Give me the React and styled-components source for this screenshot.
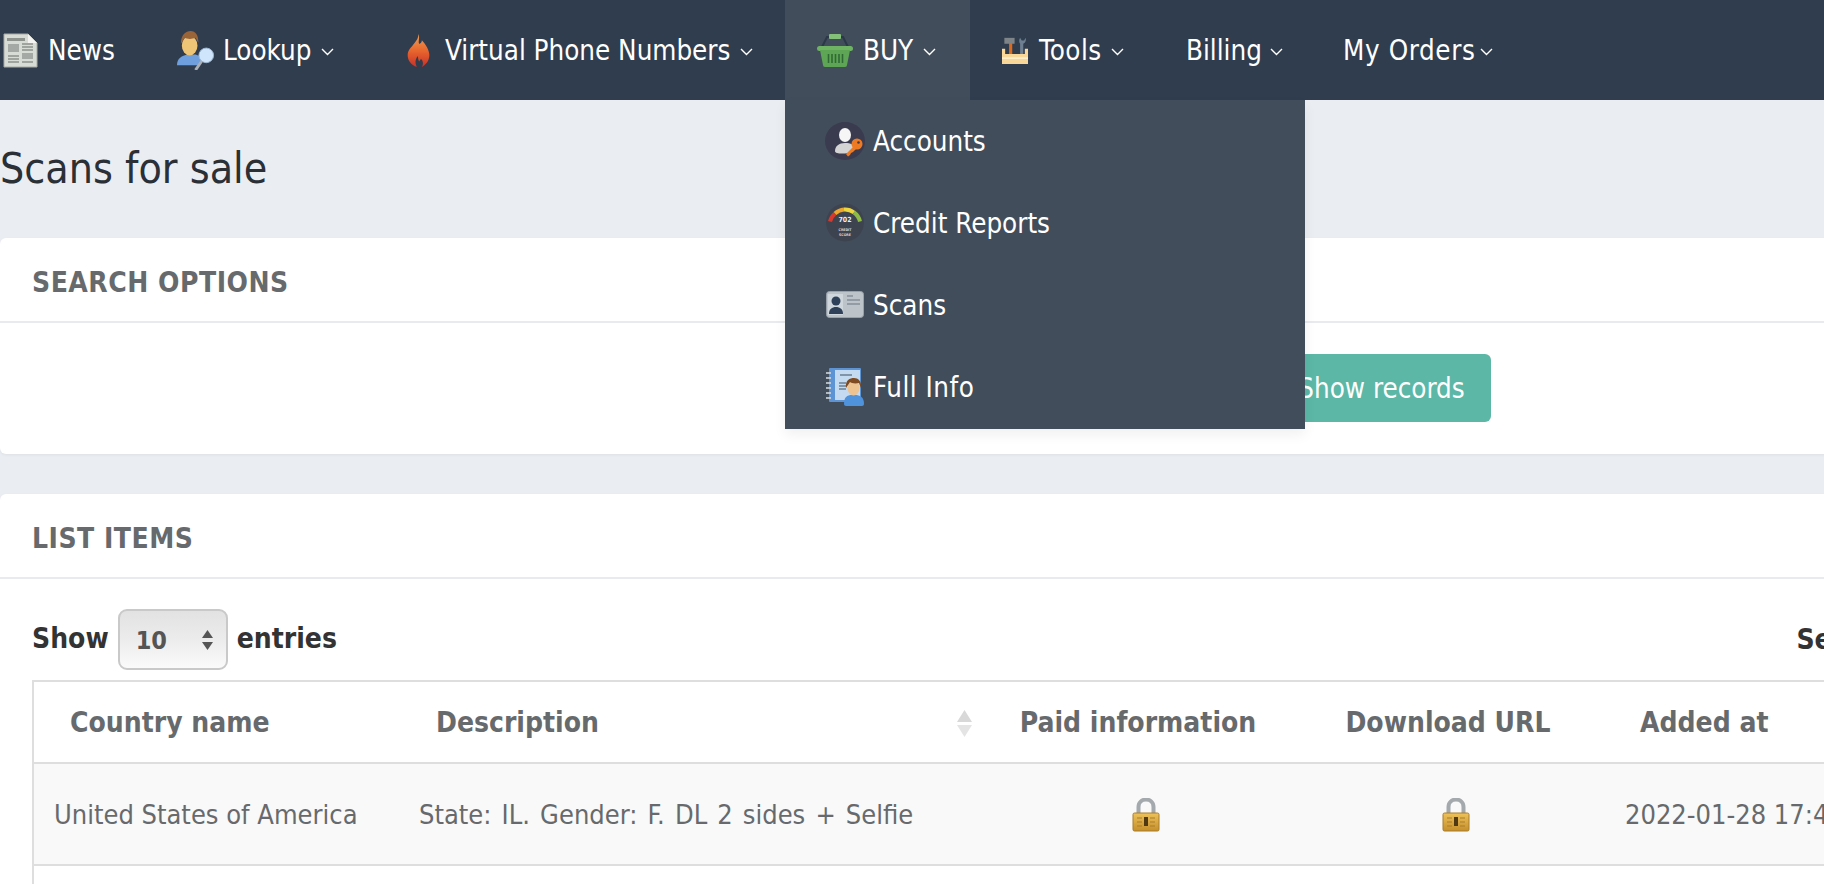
import React from "react";
import styled, { createGlobalStyle } from "styled-components";

const GlobalStyle = createGlobalStyle`
  html, body {
    margin: 0;
    padding: 0;
    height: 100%;
    overflow: hidden;
    background: #eaedf2;
  }
  body {
    font-family: "DejaVu Sans", Tahoma, sans-serif;
    font-stretch: condensed;
    color: #2b2f36;
  }
  * {
    box-sizing: border-box;
  }
`;

const NewsIcon = () => (
  <svg width="35" height="35" viewBox="0 0 35 35">
    <path d="M1 1h24l9 9v24H1z" fill="#d8dcd6" stroke="#a9aca6" />
    <path d="M25 1v9h9z" fill="#f4f5f2" />
    <path d="M4 5h18v3H4z" fill="#8f938e" />
    <path d="M5 11h11v8H5z" fill="#a5a9a5" />
    <path d="M19 11h11M19 14h11M19 17h11M5 23h11M5 26h11M5 29h11M19 29h11" stroke="#8d918c" strokeWidth="1.5" />
    <path d="M19 20h11v6H19z" fill="#a5a9a5" />
  </svg>
);

const LookupIcon = () => (
  <svg width="39" height="39" viewBox="0 0 40 40">
    <path d="M1 35c0-7 5-10 11-11h8c4 1 6 3 7 5l-3 6z" fill="#6f9fdc" />
    <ellipse cx="14" cy="15" rx="8" ry="10" fill="#eec477" />
    <path d="M5 13c0-9 5-13 10-13s8 4 8 12l-3-5c-5 2-9 1-11 0z" fill="#9a6439" />
    <path d="M20 40l7-10" stroke="#a9b0b8" strokeWidth="3" />
    <circle cx="31" cy="25" r="7.5" fill="#cfe5fb" stroke="#9db8d1" />
  </svg>
);

const FireIcon = () => (
  <svg width="25" height="35" viewBox="0 0 30 38" preserveAspectRatio="none">
    <defs>
      <linearGradient id="fire" x1="0" y1="0" x2="0" y2="1">
        <stop offset="0" stopColor="#f0a15a" />
        <stop offset="0.5" stopColor="#e8672e" />
        <stop offset="1" stopColor="#c7302a" />
      </linearGradient>
    </defs>
    <path d="M15 1c2 5-1 8 1 11 3-1 3-3 3-4 5 5 9 11 9 16 0 7-5 11-9 13 2-3 2-6-1-9-1 2-2 2-2 3-2-2-1-4-2-6-2 3-4 6-1 12C6 35 2 30 2 24c0-6 5-9 8-13 3-3 5-6 5-10z" fill="url(#fire)" />
  </svg>
);

const BasketIcon = () => (
  <svg width="36" height="33" viewBox="0 0 36 33">
    <path d="M5 13l5-10h16l5 10" fill="none" stroke="#2b3848" strokeWidth="2" />
    <rect x="12" y="0" width="12" height="5" rx="1" fill="#84c178" />
    <rect x="0" y="12" width="36" height="5" rx="2.500" fill="#6eb263" />
    <path d="M3 16h30l-3 15a2 2 0 0 1-2 2H8a2 2 0 0 1-2-2z" fill="#5fa556" />
    <path d="M11.500 20v9M15 20v9M18.500 20v9M22 20v9M25.500 20v9" stroke="#2f6a33" strokeWidth="1.600" />
  </svg>
);

const ToolsIcon = () => (
  <svg width="26" height="27" viewBox="0 0 33 32" preserveAspectRatio="none">
    <path d="M9 4h4v20H9z" fill="#dd6a1f" />
    <path d="M3 1h13v7H3z" fill="#7f8489" />
    <path d="M23 8v14h4V8c3-1 4-4 3-7l-2 3h-3l-2-3c-2 3-1 6 0 7z" fill="#6d7f90" />
    <path d="M0 14h4v6h25v-6h4v18H0z" fill="#f9d798" />
    <path d="M0 24h33v2H0z" fill="#fdeecb" />
  </svg>
);

const AccountsIcon = () => (
  <svg width="40" height="38" viewBox="0 0 40 38">
    <ellipse cx="20" cy="19" rx="20" ry="19" fill="#3a3b4f" />
    <ellipse cx="20" cy="13" rx="6" ry="7" fill="#f6f6f6" />
    <path d="M10 29c0-5 4-8 10-8s9 2 9 4l-6 6c-5 1-13 1-13-2z" fill="#d4d4d4" />
    <circle cx="32" cy="22" r="5.500" fill="#ef7a24" />
    <circle cx="33.500" cy="20.500" r="1.300" fill="#3a3b4f" />
    <path d="M29 24l-8 8 2 2.500 2-1.500 1-2 2-1 4-4z" fill="#ef7a24" />
  </svg>
);

const GaugeIcon = () => (
  <svg width="40" height="39" viewBox="0 0 40 38">
    <circle cx="20" cy="19" r="19" fill="#3d4450" />
    <path d="M5 18a15 15 0 0 1 5-8" fill="none" stroke="#d8392e" strokeWidth="4" />
    <path d="M10 10a15 15 0 0 1 9-4" fill="none" stroke="#eda52d" strokeWidth="4" />
    <path d="M19 6a15 15 0 0 1 10 3" fill="none" stroke="#ecd63f" strokeWidth="4" />
    <path d="M29 9a15 15 0 0 1 6 9" fill="none" stroke="#8dbb45" strokeWidth="4" />
    <text x="20" y="18" fontSize="7" fontWeight="700" fill="#eceff2" textAnchor="middle">702</text>
    <text x="20" y="27" fontSize="3.500" fontWeight="700" fill="#d5d8dc" textAnchor="middle">CREDIT</text>
    <text x="20" y="32" fontSize="3.500" fontWeight="700" fill="#d5d8dc" textAnchor="middle">SCORE</text>
  </svg>
);

const CardIcon = () => (
  <svg width="38" height="27" viewBox="0 0 38 27">
    <rect x="0.500" y="0.500" width="37" height="26" rx="3" fill="#bcc3c9" stroke="#98a1a9" />
    <rect x="2" y="3" width="15" height="21" fill="#cfd6dc" />
    <circle cx="10" cy="10" r="4.500" fill="#2f4159" />
    <path d="M3 23c0-5 3-7 7-7s7 2 7 7z" fill="#2f4159" />
    <path d="M21 5h6M21 9h13M21 13h13" stroke="#939ca4" strokeWidth="1.800" />
  </svg>
);

const BookIcon = () => (
  <svg width="39" height="39" viewBox="0 0 39 39">
    <rect x="3" y="1" width="32" height="34" rx="1" fill="#5d95d4" />
    <rect x="9" y="3" width="25" height="30" fill="#c4daf0" />
    <path d="M14 8h12M13 16h7M13 19h7M13 22h7" stroke="#6b7f93" strokeWidth="1.500" />
    <path d="M0 6h5M0 11h5M0 16h5M0 21h5M0 26h5M0 31h5" stroke="#d9dde2" strokeWidth="1.500" />
    <path d="M18 37c0-7 3-9 8-9h3c5 0 9 2 9 9 0 1-1 2-2 2H20c-1 0-2-1-2-2z" fill="#4e93dc" />
    <ellipse cx="27.500" cy="21" rx="6" ry="7.500" fill="#edc391" />
    <path d="M20 21c-1-8 4-10 8-10s8 3 7 10l-2-5c-4 1-8 0-9-1z" fill="#7d4a22" />
  </svg>
);

const LockIcon = () => (
  <svg width="28" height="34" viewBox="0 0 28 34">
    <defs>
      <linearGradient id="lockBody" x1="0" y1="0" x2="0" y2="1">
        <stop offset="0" stopColor="#eec25a" />
        <stop offset="1" stopColor="#c58f2c" />
      </linearGradient>
    </defs>
    <path d="M6.500 16V9c0-10 15-10 15 0v7" fill="none" stroke="#a4a9ae" strokeWidth="4" />
    <rect x="1" y="15" width="26" height="18" rx="1.500" fill="url(#lockBody)" stroke="#a97d2b" />
    <rect x="12" y="19" width="4" height="9" fill="#4f3a14" />
    <path d="M5 20h5M5 24h5M5 28h5M18 20h5M18 24h5M18 28h5" stroke="#a97d2b" />
  </svg>
);

const Chevron = ({ gap = 10 }) => (
  <ChevronMark $gap={gap} width="13" height="8" viewBox="0 0 13 8">
    <path d="M1 1l5.500 5.500L12 1" fill="none" stroke="#fff" strokeWidth="1.400" />
  </ChevronMark>
);

const menuItems = [
  { label: "Accounts", icon: <AccountsIcon /> },
  { label: "Credit Reports", icon: <GaugeIcon /> },
  { label: "Scans", icon: <CardIcon /> },
  { label: "Full Info", icon: <BookIcon />, tracking: 0.5 },
];

const App = () => (
  <Page>
    <GlobalStyle />
    <NavBar>
      <NavItem $width={176} $lead={3}>
        <NewsIcon />
        <NavLabel $gap={10}>News</NavLabel>
      </NavItem>
      <NavItem $width={230} $lead={0}>
        <LookupIcon />
        <NavLabel $gap={8}>Lookup</NavLabel>
        <Chevron />
      </NavItem>
      <NavItem $width={379} $lead={0}>
        <FireIcon />
        <NavLabel $gap={14}>Virtual Phone Numbers</NavLabel>
        <Chevron />
      </NavItem>
      <NavItem $width={185} $lead={32} $active>
        <BasketIcon />
        <NavLabel $gap={10}>BUY</NavLabel>
        <Chevron />
        <Menu>
          {menuItems.map((item) => (
            <MenuItem key={item.label} $tracking={item.tracking}>
              <MenuIconBox>{item.icon}</MenuIconBox>
              {item.label}
            </MenuItem>
          ))}
        </Menu>
      </NavItem>
      <NavItem $width={206} $lead={32}>
        <ToolsIcon />
        <NavLabel $gap={11} $tracking={0.4}>Tools</NavLabel>
        <Chevron />
      </NavItem>
      <NavItem $width={157} $lead={0}>
        <NavLabel $gap={10}>Billing</NavLabel>
        <Chevron gap={8} />
      </NavItem>
      <NavItem $width={240} $lead={0}>
        <NavLabel $gap={10} $tracking={0.6}>My Orders</NavLabel>
        <Chevron gap={5} />
      </NavItem>
    </NavBar>

    <Title>Scans for sale</Title>

    <Panel>
      <PanelHeading>SEARCH OPTIONS</PanelHeading>
      <SearchBody>
        <ShowButton>Show records</ShowButton>
      </SearchBody>
    </Panel>

    <Panel $gap>
      <PanelHeading>LIST ITEMS</PanelHeading>
      <ListBody>
        <TableControls>
          <LengthControl>
            Show
            <FakeSelect>
              10
              <SelectArrows width="13" height="22" viewBox="0 0 13 22">
                <path d="M6.500 1L12 9H1z" fill="#555" />
                <path d="M6.500 21L12 13H1z" fill="#555" />
              </SelectArrows>
            </FakeSelect>
            entries
          </LengthControl>
          <SearchLabel>Search:</SearchLabel>
        </TableControls>
        <DataTable>
          <colgroup>
            <col style={{ width: 366 }} />
            <col style={{ width: 586 }} />
            <col style={{ width: 322 }} />
            <col style={{ width: 298 }} />
            <col style={{ width: 400 }} />
          </colgroup>
          <thead>
            <tr>
              <HeadCell $pad={36}>Country name</HeadCell>
              <HeadCell $pad={37}>
                Description
                <SortArrows width="17" height="29" viewBox="0 0 17 29">
                  <path d="M8.500 1L16 13H1z" fill="#d8d8d8" />
                  <path d="M8.500 28L16 16H1z" fill="#e4e4e4" />
                </SortArrows>
              </HeadCell>
              <HeadCell $center>Paid information</HeadCell>
              <HeadCell $center>Download URL</HeadCell>
              <HeadCell $pad={35}>Added at</HeadCell>
            </tr>
          </thead>
          <tbody>
            <BodyRow $striped>
              <BodyCell>United States of America</BodyCell>
              <BodyCell $wordGap={2.4}>State: IL. Gender: F. DL 2 sides + Selfie</BodyCell>
              <BodyCell $center><LockIcon /></BodyCell>
              <BodyCell $center><LockIcon /></BodyCell>
              <BodyCell>2022-01-28 17:44:10</BodyCell>
            </BodyRow>
            <BodyRow>
              <BodyCell>&nbsp;</BodyCell>
              <BodyCell />
              <BodyCell />
              <BodyCell />
              <BodyCell />
            </BodyRow>
          </tbody>
        </DataTable>
      </ListBody>
    </Panel>
  </Page>
);

export default App;

const Page = styled.div`
  width: 1824px;
  height: 884px;
  overflow: hidden;
`;

const NavBar = styled.nav`
  display: flex;
  height: 100px;
  background: #303d4e;
`;

const NavItem = styled.div`
  position: relative;
  flex: 0 0 ${({ $width }) => $width}px;
  display: flex;
  align-items: center;
  padding-left: ${({ $lead }) => $lead}px;
  color: #fff;
  font-size: 27.5px;
  background: ${({ $active }) => ($active ? "#424d5c" : "transparent")};
`;

const NavLabel = styled.span`
  margin-left: ${({ $gap }) => $gap}px;
  letter-spacing: ${({ $tracking }) => $tracking || 0}px;
  white-space: nowrap;
`;

const ChevronMark = styled.svg`
  margin-left: ${({ $gap }) => $gap}px;
  margin-top: 3px;
  flex: none;
`;

const Menu = styled.div`
  position: absolute;
  top: 100px;
  left: 0;
  width: 520px;
  height: 329px;
  background: #424d5c;
  box-shadow: 0 6px 12px rgba(0, 0, 0, 0.06);
  z-index: 5;
`;

const MenuItem = styled.div`
  display: flex;
  align-items: center;
  height: 82px;
  padding: 0 0 1px 40px;
  color: #fff;
  font-size: 27.5px;
  letter-spacing: ${({ $tracking }) => $tracking || 0}px;
`;

const MenuIconBox = styled.span`
  display: flex;
  justify-content: center;
  width: 40px;
  margin-right: 8px;
`;

const Title = styled.h1`
  margin: 0;
  height: 138px;
  padding-top: 39px;
  font-size: 42.5px;
  font-weight: 400;
  line-height: 60px;
  color: #2b2f36;
`;

const Panel = styled.section`
  width: 2100px;
  margin-top: ${({ $gap }) => ($gap ? "40px" : "0")};
  background: #fff;
  border-radius: 6px;
  box-shadow: 0 1px 3px rgba(0, 0, 0, 0.06);
`;

const PanelHeading = styled.h2`
  margin: 0;
  height: 85px;
  padding: 3px 32px 0;
  border-bottom: 2px solid #e8ebee;
  font-size: 28px;
  font-weight: 700;
  letter-spacing: 0.5px;
  line-height: 83px;
  color: #676a6c;
`;

const SearchBody = styled.div`
  display: flex;
  align-items: center;
  height: 131px;
  padding: 0 0 2px 1272px;
`;

const ShowButton = styled.button`
  width: 219px;
  height: 68px;
  border: 0;
  border-radius: 6px;
  background: #5cb7a6;
  color: #fff;
  font-family: inherit;
  font-stretch: condensed;
  font-size: 27.5px;
`;

const ListBody = styled.div`
  padding: 30px 32px 0;
`;

const TableControls = styled.div`
  display: flex;
  justify-content: space-between;
  align-items: center;
  width: 1872px;
  height: 61px;
  margin-bottom: 10px;
`;

const LengthControl = styled.div`
  display: flex;
  align-items: center;
  gap: 9px;
  font-size: 28px;
  font-weight: 700;
  color: #333;
  margin-top: -2px;
`;

const FakeSelect = styled.div`
  position: relative;
  width: 110px;
  height: 61px;
  margin-top: 2px;
  padding-left: 16px;
  border: 2px solid #c9c9c9;
  border-radius: 9px;
  background: linear-gradient(#e2e2e2, #ececec 50%, #fafafa);
  color: #555;
  font-size: 25px;
  line-height: 59px;
`;

const SelectArrows = styled.svg`
  position: absolute;
  right: 12px;
  top: 18px;
`;

const SearchLabel = styled.span`
  font-size: 28px;
  font-weight: 700;
  color: #333;
`;

const DataTable = styled.table`
  width: 1972px;
  table-layout: fixed;
  border-collapse: collapse;
  border: 2px solid #dedede;
`;

const HeadCell = styled.th`
  position: relative;
  height: 82px;
  padding: ${({ $center, $pad }) => ($center ? "0 16px 0 0" : `0 0 0 ${$pad}px`)};
  border-bottom: 2px solid #dedede;
  font-size: 28px;
  font-weight: 700;
  color: #676a6c;
  text-align: ${({ $center }) => ($center ? "center" : "left")};
  white-space: nowrap;
`;

const SortArrows = styled.svg`
  position: absolute;
  right: 12px;
  top: 27px;
`;

const BodyRow = styled.tr`
  background: ${({ $striped }) => ($striped ? "#f9f9f9" : "#fff")};
`;

const BodyCell = styled.td`
  height: 102px;
  padding: 0 0 0 20px;
  border-bottom: 2px solid #dedede;
  font-size: 27px;
  color: #676a6c;
  word-spacing: ${({ $wordGap }) => $wordGap || 0}px;
  text-align: ${({ $center }) => ($center ? "center" : "left")};
  white-space: nowrap;
  ${({ $center }) => $center && "padding: 8px 0 0;"}
`;
